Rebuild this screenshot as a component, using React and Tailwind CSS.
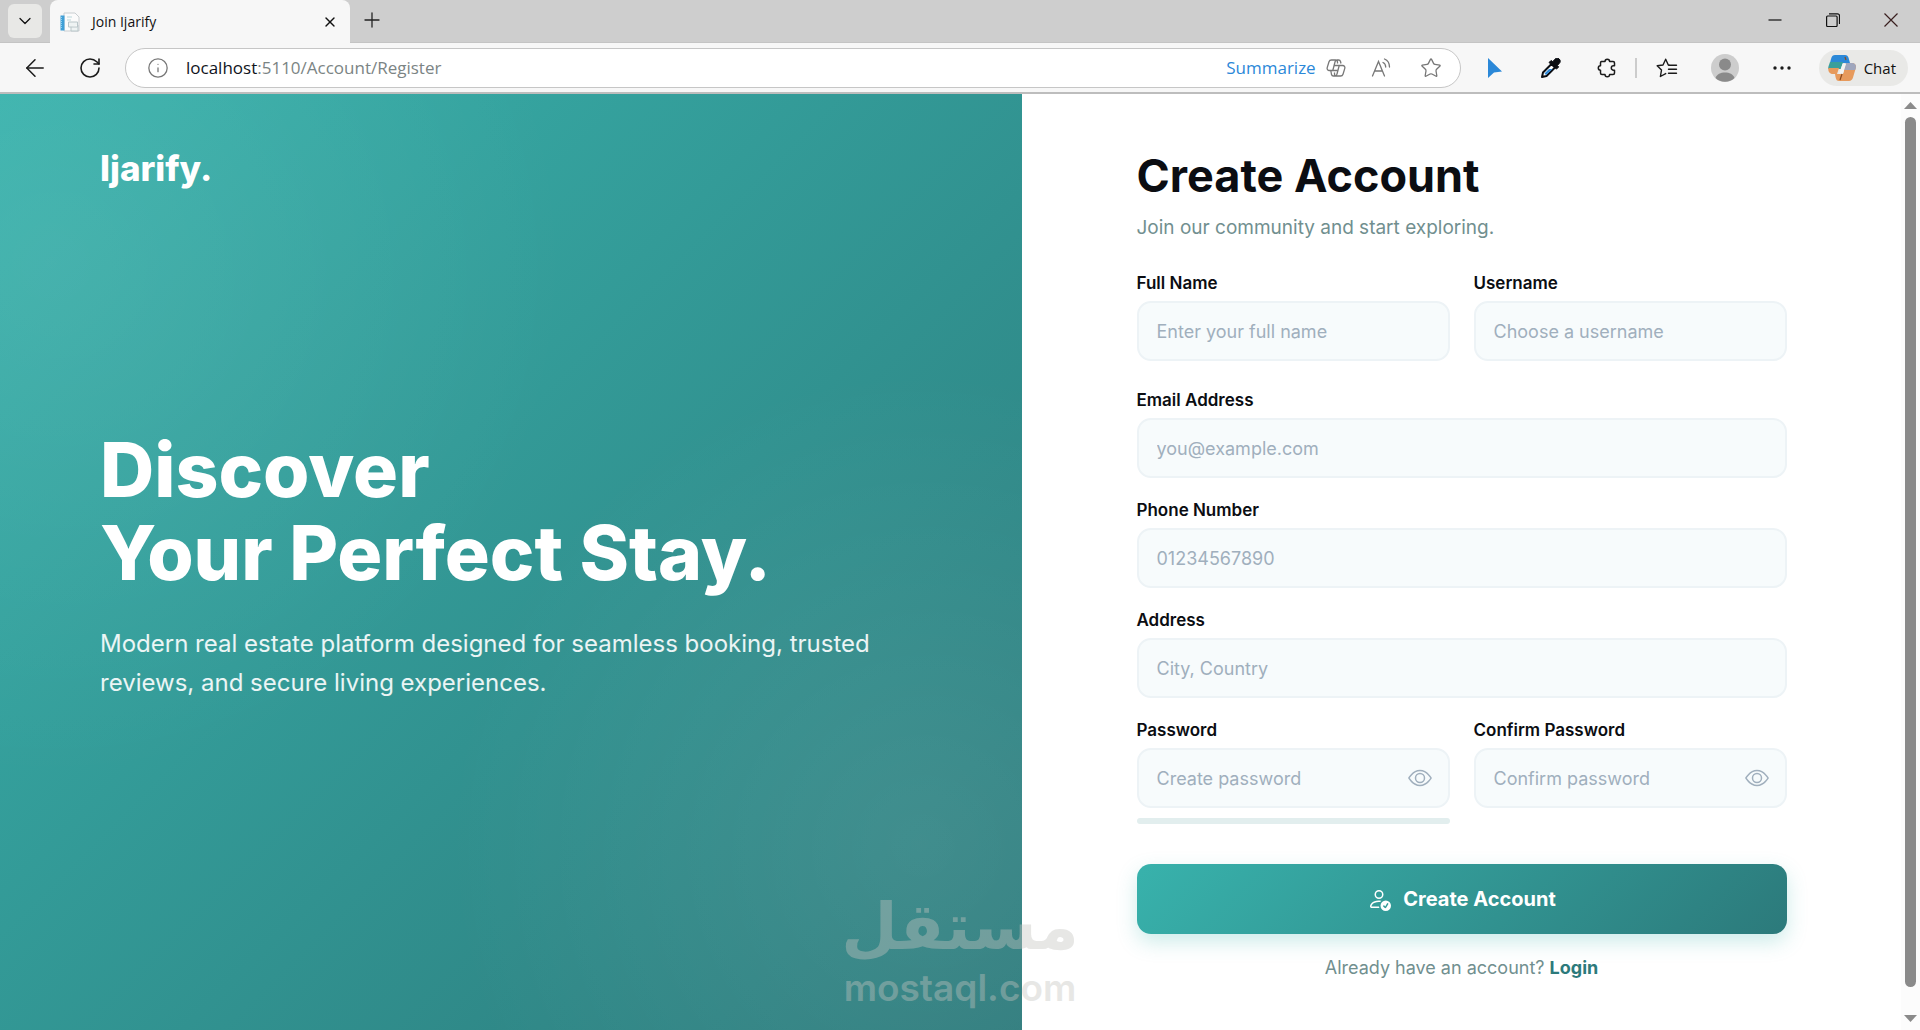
import React, { useState } from 'react'
import { ArrowLeft, ChevronDown, Info, Plus, RotateCw, Star, X } from 'lucide-react'
import { BsEye, BsPersonCheck } from 'react-icons/bs'

function PageIcon() {
  return (
    <svg viewBox="0 0 20 20" className="w-5 h-5 shrink-0">
      <path d="M4 1h11l4 4v14H4z" fill="#fbfbfb" stroke="#c9ced1" strokeWidth="1" />
      <path d="M0.5 3.5h4v15h-4z" fill="#3f9fd6" />
      <path d="M1.5 5v12" stroke="#8fd0ef" strokeWidth="1" strokeDasharray="1 1" />
      <path d="M7 5h5M7 8h4" stroke="#cfe3e6" strokeWidth="1.5" />
      <path d="M8.5 10h9v5h-9zM11 15v4h7v-6" fill="#eef3f3" stroke="#b9c6c9" strokeWidth="1" />
    </svg>
  )
}

function CopilotOutline() {
  return (
    <svg viewBox="0 0 20 18" className="w-5 h-[18px]" fill="none" stroke="#777" strokeWidth="1.3" strokeLinejoin="round">
      <path d="M11.500 4.500V3a2 2 0 0 0-2-2H5.500A2.600 2.600 0 0 0 3 2.800L1.200 8.600A2.200 2.200 0 0 0 3.300 11.500H6.800L9 3a2.400 2.400 0 0 1 2-2h1.500a2 2 0 0 1 2 1.500l.5 2" />
      <path d="M8.500 13.500V15a2 2 0 0 0 2 2h4a2.600 2.600 0 0 0 2.500-1.800l1.800-5.800a2.200 2.200 0 0 0-2.100-2.900h-3.500L11 15a2.400 2.400 0 0 1-2 2H7.500a2 2 0 0 1-2-1.500L4.800 11.500" />
      <path d="M8 6.500h5.200M6.800 11.500h5" />
    </svg>
  )
}

function ReadAloud() {
  return (
    <svg viewBox="0 0 20 20" className="w-5 h-5" fill="none" stroke="#777" strokeWidth="1.3" strokeLinecap="round">
      <path d="M1.500 18 7.500 3.500 13.500 18M3.700 13h7.600" />
      <path d="M12 4.500c1.800.8 2.700 2.300 2.700 4.500M13.500 1c3.200 1.300 5 4 5 8" />
    </svg>
  )
}

function Eyedropper() {
  return (
    <svg viewBox="0 0 20 20" className="w-5 h-5">
      <path d="M1 19l1-4.500L10.500 6l3.500 3.500L5.500 18z" fill="#fff" stroke="#0b0d12" strokeWidth="2" strokeLinejoin="round" />
      <path d="M3.500 15.500 8 11h3.500l-6.500 6z" fill="#2b88d8" />
      <path d="M8 4.500l2-2 1.800 1.200 1.800-2.200c1-1.400 3-1.800 4.500-.6 1.600 1.400 1.500 3.500-.1 4.900l-1.700 1.600 1.400 1.500-2.200 2.200z" fill="#0b0d12" stroke="#0b0d12" strokeLinejoin="round" />
    </svg>
  )
}

function PuzzleIcon() {
  return (
    <svg viewBox="0 0 20 20" className="w-5 h-5" fill="none" stroke="#1b1b1b" strokeWidth="1.500" strokeLinejoin="round">
      <path d="M4.500 3.500H8a2.300 2.300 0 0 1 4.600 0h3.400a1.500 1.500 0 0 1 1.500 1.500v2.800h-1a2.200 2.200 0 0 0 0 4.400h1V15a1.500 1.500 0 0 1-1.500 1.500h-3.400a2.300 2.300 0 0 1-4.600 0H5A1.500 1.500 0 0 1 3.500 15v-2.800a2.200 2.200 0 0 1 0-4.400V5a1.500 1.500 0 0 1 1-1.500z" />
    </svg>
  )
}

function FavoritesIcon() {
  return (
    <svg viewBox="0 0 22 20" className="w-[22px] h-5" fill="none" stroke="#1b1b1b" strokeWidth="1.400" strokeLinejoin="round" strokeLinecap="round">
      <path d="M13 7.200 12.300 7 9.700 1.200 7 7 1.200 7.800 5.500 12 4.400 18.500 9.700 15.600" />
      <path d="M13 7.300H20.500M12.500 11.300H20.500M12.500 15.300H20.500" />
    </svg>
  )
}

function Avatar() {
  return (
    <svg viewBox="0 0 28 28" className="w-7 h-7">
      <circle cx="14" cy="14" r="14" fill="#cdcdcd" />
      <circle cx="14" cy="10.500" r="6" fill="#8a8a8a" />
      <path d="M4.500 24c1.500-4 5-5.500 9.500-5.500s8 1.500 9.500 5.500a14 14 0 0 1-19 0z" fill="#8a8a8a" />
    </svg>
  )
}

function CopilotColor() {
  return (
    <svg viewBox="0 0 28 26" className="w-7 h-[26px]">
      <path d="M7 0h10c2 0 3 1 3.600 3l1.400 5H2L3.300 3C4 1.200 5 0 7 0z" fill="#2b88d8" />
      <path d="M2 7h13l-2 7H.200c0-1.500.100-2 .400-3z" fill="#3a9f9b" />
      <path d="M.3 13H11l-2 6H5c-3.500 0-5-2.500-4.700-6z" fill="#e79a5c" />
      <path d="M21 26H11c-2 0-2.700-1-3.500-4l-.5-3h8l3-11h6c3 0 4.600 2 3.800 5L25 22.500c-.6 2.300-2 3.500-4 3.500z" fill="#e79a5c" />
      <path d="M18 8h6c3 0 4.400 2 3.800 5l-.6 2H16z" fill="#9fa6bd" />
      <path d="M14.500 9H18l-3 9.500h-4z" fill="#f4f4f2" />
      <path d="M12 25l2-6M17 2l1 3" stroke="#8c4a1d" strokeWidth="1.200" fill="none" />
    </svg>
  )
}

function ChromeButton({ label, className, children }) {
  return (
    <button type="button" aria-label={label} className={`flex items-center justify-center shrink-0 h-10 ${className}`}>
      {children}
    </button>
  )
}

function TabStrip() {
  return (
    <div className="flex items-stretch h-[43px] bg-[#cecece] border-b border-[#c4c4c4]">
      <div className="w-[50px] shrink-0 flex items-center pl-2">
        <button type="button" aria-label="Tab actions" className="w-[34px] h-[34px] rounded-md bg-[#e8e8e6] flex items-center justify-center">
          <ChevronDown className="w-5 h-5 text-[#111]" strokeWidth={1.5} />
        </button>
      </div>
      <div className="w-[300px] h-[43px] shrink-0 bg-[#f7f7f7] rounded-t-lg flex items-center pl-[10px] pr-[10px] gap-3">
        <PageIcon />
        <span className="flex-1 text-[14px] leading-5 text-[#111]">Join Ijarify</span>
        <button type="button" aria-label="Close tab" className="w-5 h-5 flex items-center justify-center">
          <X className="w-4 h-4 text-[#111]" strokeWidth={2} />
        </button>
      </div>
      <ChromeButton label="New tab" className="w-11">
        <Plus className="w-6 h-6 text-[#222]" strokeWidth={1.3} />
      </ChromeButton>
      <div className="flex-1" />
      <ChromeButton label="Minimize" className="w-[58px]">
        <svg viewBox="0 0 14 14" className="w-[14px] h-[14px]"><path d="M0.500 7h13" stroke="#111" strokeWidth="1.200" /></svg>
      </ChromeButton>
      <ChromeButton label="Restore" className="w-[58px]">
        <svg viewBox="0 0 14 14" className="w-[14px] h-[14px]" fill="none" stroke="#111" strokeWidth="1.200">
          <rect x="0.600" y="3" width="10.500" height="10.500" rx="1" />
          <path d="M3 0.800h8.500a2 2 0 0 1 2 2V11" />
        </svg>
      </ChromeButton>
      <ChromeButton label="Close" className="w-[58px]">
        <svg viewBox="0 0 14 14" className="w-[14px] h-[14px]"><path d="M0.500 0.500l13 13M13.500 0.500l-13 13" stroke="#3a2020" strokeWidth="1.200" /></svg>
      </ChromeButton>
    </div>
  )
}

function Toolbar() {
  return (
    <div className="flex items-center h-[51px] bg-[#f7f7f7] border-b-2 border-[#bdbdbd] pl-2 pr-3">
      <ChromeButton label="Back" className="w-[54px]">
        <ArrowLeft className="w-7 h-7 text-[#1b1b1b]" strokeWidth={1.3} />
      </ChromeButton>
      <ChromeButton label="Reload" className="w-[56px]">
        <RotateCw className="w-6 h-6 text-[#1b1b1b]" strokeWidth={1.6} />
      </ChromeButton>
      <div className="flex-1 flex items-center h-10 ml-[7px] mr-[7px] pl-[21px] pr-1 rounded-full bg-white border border-[#c6c6c6]">
        <Info className="w-[22px] h-[22px] text-[#777] shrink-0" strokeWidth={1.4} />
        <div className="flex-1 pl-[17px] text-[17px] leading-6 text-[#7b8484]">
          <span className="text-[#10131c]">localhost</span>:5110/Account/Register
        </div>
        <button type="button" className="text-[17px] leading-6 text-[#2b88d8]">Summarize</button>
        <ChromeButton label="Copilot" className="w-10"><CopilotOutline /></ChromeButton>
        <ChromeButton label="Read aloud" className="w-[50px]"><ReadAloud /></ChromeButton>
        <ChromeButton label="Add to favorites" className="w-[50px]">
          <Star className="w-[22px] h-[22px] text-[#777]" strokeWidth={1.4} />
        </ChromeButton>
      </div>
      <ChromeButton label="Pointer" className="w-[55px]">
        <svg viewBox="0 0 14 20" className="w-[14px] h-5"><path d="M0 0l14 13.500-8 1L0 20z" fill="#2b88d8" /></svg>
      </ChromeButton>
      <ChromeButton label="Color picker" className="w-14"><Eyedropper /></ChromeButton>
      <ChromeButton label="Extensions" className="w-14"><PuzzleIcon /></ChromeButton>
      <div className="w-[2px] h-5 bg-[#cccccc]" />
      <ChromeButton label="Favorites" className="w-[60px]"><FavoritesIcon /></ChromeButton>
      <ChromeButton label="Profile" className="w-14"><Avatar /></ChromeButton>
      <ChromeButton label="Settings" className="w-[58px]">
        <svg viewBox="0 0 18 4" className="w-[18px] h-1" fill="#1b1b1b">
          <circle cx="2" cy="2" r="1.700" /><circle cx="9" cy="2" r="1.700" /><circle cx="16" cy="2" r="1.700" />
        </svg>
      </ChromeButton>
      <button type="button" className="flex items-center gap-2 h-9 ml-2 pl-[9px] pr-3 rounded-full bg-[#e9e9e7] text-[15px] leading-5 text-[#111]">
        <CopilotColor /> Chat
      </button>
    </div>
  )
}

function Scrollbar() {
  return (
    <div className="w-[19px] shrink-0 flex flex-col items-center py-2 gap-2 bg-[#fcfcfc]">
      <svg viewBox="0 0 13 7" className="w-[13px] h-[7px] shrink-0" fill="#8a8a8a"><path d="M6.500 0 13 7H0z" /></svg>
      <div className="w-[11px] h-[97%] rounded-full bg-[#8a8a8a]" />
      <div className="h-3 shrink-0" />
      <svg viewBox="0 0 13 7" className="w-[13px] h-[7px] shrink-0" fill="#8a8a8a"><path d="M6.500 7 13 0H0z" /></svg>
    </div>
  )
}

const labelClass = 'block mb-[6px] text-[17px] leading-6 font-semibold text-[#0b0d12]'
const inputClass =
  'block w-full h-[60px] rounded-[14px] border-2 border-[#edf3f6] bg-[#f7fbfc] px-[18px] text-[18px] leading-6 text-[#0b0d12] placeholder:text-[#a0afbd] outline-none focus:border-[#38b2ac]'

function Field({ id, label, type = 'text', placeholder }) {
  return (
    <div>
      <label htmlFor={id} className={labelClass}>{label}</label>
      <input id={id} name={id} type={type} placeholder={placeholder} className={inputClass} />
    </div>
  )
}

function PasswordField({ id, label, placeholder, children }) {
  const [visible, setVisible] = useState(false)
  return (
    <div>
      <label htmlFor={id} className={labelClass}>{label}</label>
      <div className="relative">
        <input id={id} name={id} type={visible ? 'text' : 'password'} placeholder={placeholder} className={inputClass} />
        <button type="button" aria-label="Toggle password visibility" onClick={() => setVisible(!visible)}
          className="absolute inset-y-0 right-[18px] flex items-center text-[#a0afbd]">
          <BsEye className="w-6 h-6" />
        </button>
      </div>
      {children}
    </div>
  )
}

function Hero() {
  return (
    <section className="flex flex-col px-[100px] pt-[50px] text-white bg-[radial-gradient(circle_at_5%_18%,rgba(255,255,255,0.08),transparent_42%),radial-gradient(circle_at_90%_80%,rgba(255,255,255,0.09),transparent_40%),linear-gradient(135deg,#38b2ac,#2c7a7b)]">
      <div className="text-[35px] leading-[48px] font-extrabold">Ijarify.</div>
      <h1 className="mt-[236px] text-[75px] leading-[83px] font-extrabold">Discover<br />Your Perfect Stay.</h1>
      <p className="mt-[30px] text-[24px] leading-[39px] text-white/90">
        Modern real estate platform designed for seamless booking, trusted reviews, and secure living experiences.
      </p>
    </section>
  )
}

function RegisterForm() {
  return (
    <section className="bg-white pt-[54px]">
      <div className="w-full max-w-[650px] mx-auto">
        <h2 className="text-[45px] leading-[56px] font-bold text-[#0b0d12]">Create Account</h2>
        <p className="mt-[10px] text-[19px] leading-7 text-[#718f8f]">Join our community and start exploring.</p>
        <form className="mt-[29px]" onSubmit={e => e.preventDefault()}>
          <div className="grid grid-cols-2 gap-6 mb-[27px]">
            <Field id="fullName" label="Full Name" placeholder="Enter your full name" />
            <Field id="username" label="Username" placeholder="Choose a username" />
          </div>
          <div className="space-y-5">
            <Field id="email" label="Email Address" type="email" placeholder="you@example.com" />
            <Field id="phone" label="Phone Number" type="tel" placeholder="01234567890" />
            <Field id="address" label="Address" placeholder="City, Country" />
            <div className="grid grid-cols-2 gap-6">
              <PasswordField id="password" label="Password" placeholder="Create password">
                <div className="mt-[10px] h-[6px] rounded-full bg-[#e2eeee]" />
              </PasswordField>
              <PasswordField id="confirmPassword" label="Confirm Password" placeholder="Confirm password" />
            </div>
          </div>
          <button type="submit"
            className="mt-10 w-full h-[70px] rounded-[14px] flex items-center justify-center gap-3 text-[20px] leading-7 font-bold text-white bg-[linear-gradient(135deg,#38b2ac,#2c7a7b)] shadow-[0_8px_20px_rgba(56,178,172,0.25)]">
            <BsPersonCheck className="w-6 h-6" /> Create Account
          </button>
        </form>
        <p className="mt-5 text-center text-[18px] leading-7 text-[#718f8f]">
          Already have an account? <a href="#login" className="font-bold text-[#2c7a7b]">Login</a>
        </p>
      </div>
    </section>
  )
}

function Watermark() {
  return (
    <div className="absolute left-1/2 bottom-5 -translate-x-1/2 w-[230px] flex flex-col items-center text-[#c4c4c0] opacity-40 pointer-events-none">
      <span lang="ar" dir="rtl" className="font-['DejaVu_Sans',sans-serif] text-[65px] leading-[76px] font-bold">مستقل</span>
      <span className="text-[37px] leading-[45px] font-semibold">mostaql.com</span>
    </div>
  )
}

export default function App() {
  return (
    <div className="flex flex-col h-screen overflow-hidden font-['Inter',sans-serif]">
      <header className="shrink-0 font-['Open_Sans',sans-serif]">
        <TabStrip />
        <Toolbar />
      </header>
      <main className="relative flex flex-1 min-h-0">
        <div className="flex-1 grid grid-cols-[1022fr_879fr]">
          <Hero />
          <RegisterForm />
        </div>
        <Scrollbar />
        <Watermark />
      </main>
    </div>
  )
}
